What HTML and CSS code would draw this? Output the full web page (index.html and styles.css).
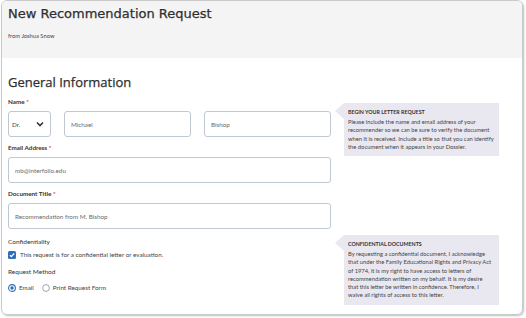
FILE: index.html
```html
<!DOCTYPE html>
<html lang="en">
<head>
  <meta charset="UTF-8" />
  <meta name="viewport" content="width=device-width, initial-scale=1" />
  <title>New Recommendation Request</title>
  <link rel="stylesheet" href="styles.css">
</head>
<body>
  <div class="card">
    <div class="card-head">
      <h1>New Recommendation Request</h1>
      <div class="from">from Joshua Snow</div>
    </div>

    <div class="card-body">
      <h2>General Information</h2>

      <div class="section">
        <div class="fields">
          <div class="field">
            <label>Name <span class="req">*</span></label>
            <div class="name-row">
              <div class="input select">
                <span>Dr.</span>
                <svg width="8" height="6" viewBox="0 0 8 6"><polyline points="1,1.5 4,4.5 7,1.5" fill="none" stroke="#333" stroke-width="1.6"/></svg>
              </div>
              <div class="input first">Michael</div>
              <div class="input last">Bishop</div>
            </div>
          </div>

          <div class="field">
            <label>Email Address <span class="req">*</span></label>
            <div class="input">mb@interfolio.edu</div>
          </div>

          <div class="field">
            <label>Document Title <span class="req">*</span></label>
            <div class="input">Recommendation from M. Bishop</div>
          </div>
        </div>

        <div class="tip tip-top">
          <div class="tip-title">Begin your letter request</div>
          <p>Please include the name and email address of your recommender so we can be sure to verify the document when it is received. Include a title so that you can identify the document when it appears in your Dossier.</p>
        </div>
      </div>

      <div class="section">
        <div class="fields fields-lower">
          <label>Confidentiality</label>
          <div class="option check-row">
            <svg class="box" width="8" height="8" viewBox="0 0 8 8"><rect x="0" y="0" width="8" height="8" rx="1.5" fill="#2f6db7"/><polyline points="1.8,4.1 3.3,5.6 6.2,2.5" fill="none" stroke="#fff" stroke-width="1.2"/></svg>
            This request is for a confidential letter or evaluation.
          </div>

          <label class="method-label">Request Method</label>
          <div class="option radio-row">
            <span class="radio-item">
              <svg width="8" height="8" viewBox="0 0 8 8"><circle cx="4" cy="4" r="3.4" fill="#fff" stroke="#2f6db7" stroke-width="1.1"/><circle cx="4" cy="4" r="1.7" fill="#2f6db7"/></svg>
              Email
            </span>
            <span class="radio-item">
              <svg width="8" height="8" viewBox="0 0 8 8"><circle cx="4" cy="4" r="3.4" fill="#fff" stroke="#999" stroke-width="0.9"/></svg>
              Print Request Form
            </span>
          </div>
        </div>

        <div class="tip">
          <div class="tip-title">Confidential documents</div>
          <p>By requesting a confidential document, I acknowledge that under the Family Educational Rights and Privacy Act of 1974, it is my right to have access to letters of recommendation written on my behalf. It is my desire that this letter be written in confidence. Therefore, I waive all rights of access to this letter.</p>
        </div>
      </div>
    </div>
  </div>
</body>
</html>
```

FILE: styles.css
```css
body {
  margin: 0;
  padding: 0;
  font-family: Lato, "Open Sans", sans-serif;
  background: #fff;
  color: #333;
}

.card {
  margin: 0 3px 4px 1px;
  border: 1px solid #c9c9c9;
  border-radius: 6px;
  box-shadow: 1px 1px 2px rgba(0, 0, 0, 0.25);
  overflow: hidden;
}

.card-head {
  background: #f4f4f4;
  height: 57px;
  padding: 4px 0 0 6px;
  box-sizing: border-box;
}

h1 {
  margin: 0;
  font-family: "DejaVu Sans", sans-serif;
  font-weight: normal;
  font-size: 13px;
  line-height: 18px;
  color: #2f2f2f;
  -webkit-text-stroke: 0.25px #2f2f2f;
}

.from {
  margin-top: 9px;
  font-size: 5.8px;
  color: #444;
}

.card-body {
  padding: 16px 6px 9px 6px;
}

h2 {
  margin: 0;
  font-family: "Open Sans", sans-serif;
  font-weight: normal;
  font-size: 13px;
  line-height: 16px;
  color: #2f2f2f;
  -webkit-text-stroke: 0.25px #2f2f2f;
}

.section {
  display: grid;
  grid-template-columns: 323px 155px;
  column-gap: 13px;
  align-items: start;
}

.section:first-of-type {
  margin-top: 8px;
}

.section + .section {
  margin-top: 6px;
}

.fields {
  display: flex;
  flex-direction: column;
  gap: 7px;
}

label {
  display: block;
  font-size: 6.3px;
  line-height: 8px;
  font-weight: bold;
  color: #333;
}

.req {
  color: #d0443e;
}

.field label {
  margin-bottom: 5px;
}

.input {
  box-sizing: border-box;
  height: 26px;
  border: 1px solid #bfc8d2;
  border-radius: 3px;
  padding: 0 6px;
  display: flex;
  align-items: center;
  font-size: 6.3px;
  color: #6b6b6b;
  background: #fff;
}

.name-row {
  display: flex;
  gap: 13px;
}

.select {
  width: 43px;
  justify-content: space-between;
  padding: 0 6px 0 3px;
  color: #444;
}

.first,
.last {
  flex: 1;
}

.fields-lower {
  gap: 0;
  padding-top: 3px;
}

.fields-lower label {
  font-weight: normal;
  font-size: 6.5px;
  color: #333;
}

.option {
  display: flex;
  align-items: center;
  font-size: 6.3px;
  line-height: 8px;
  color: #444;
}

.check-row {
  margin-top: 5px;
  gap: 4px;
}

.method-label {
  margin-top: 9px;
}

.radio-row {
  margin-top: 8px;
  gap: 8px;
}

.radio-item {
  display: flex;
  align-items: center;
  gap: 3px;
}

.tip {
  position: relative;
  background: #e9e8f0;
  padding: 5px 5px 5px 4px;
}

.tip::before {
  content: "";
  position: absolute;
  left: -9px;
  top: 0;
  border-top: 8px solid transparent;
  border-bottom: 8px solid transparent;
  border-right: 9px solid #e9e8f0;
}

.tip-top {
  margin-top: 5px;
}

.tip-title {
  font-size: 5.3px;
  line-height: 8px;
  font-weight: bold;
  text-transform: uppercase;
  color: #333;
}

.tip p {
  margin: 2px 0 0 0;
  font-size: 5.8px;
  line-height: 8.3px;
  color: #444;
}
```
